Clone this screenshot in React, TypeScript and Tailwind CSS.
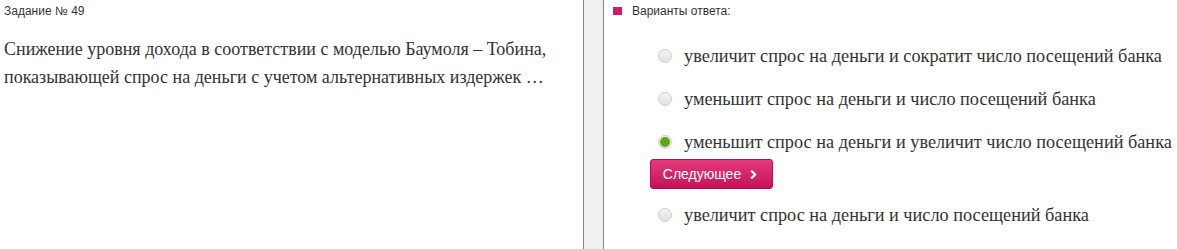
import { ChevronRight } from "lucide-react";

const options = [
  { text: "увеличит спрос на деньги и сократит число посещений банка", checked: false },
  { text: "уменьшит спрос на деньги и число посещений банка", checked: false },
  { text: "уменьшит спрос на деньги и увеличит число посещений банка", checked: true },
];

function Radio({ checked }: { checked: boolean }) {
  return (
    <span className="w-[14px] h-[14px] rounded-full border border-[#cfcfcf] bg-gradient-to-b from-[#f4f4f4] to-[#e2e2e2] flex items-center justify-center shrink-0">
      {checked && <span className="w-[10px] h-[10px] rounded-full bg-[#5aa915]" />}
    </span>
  );
}

function Option({ text, checked }: { text: string; checked: boolean }) {
  return (
    <div className="flex items-center h-[20px] pl-[54px] gap-[12px]">
      <Radio checked={checked} />
      <span className="text-[18.25px] leading-[20px] text-[#333] font-['Liberation_Serif'] whitespace-nowrap">
        {text}
      </span>
    </div>
  );
}

export default function App() {
  return (
    <div className="flex w-[1177px] h-[249px] bg-white overflow-hidden">
      <div className="w-[583px] shrink-0 pl-[4px] pt-[4px]">
        <div className="text-[12px] leading-[14px] text-[#333] font-['Liberation_Sans']">
          Задание № 49
        </div>
        <p className="mt-[17px] text-[18px] leading-[28px] text-[#333] font-['Liberation_Serif']">
          Снижение уровня дохода в соответствии с моделью Баумоля – Тобина,
          <br />
          показывающей спрос на деньги с учетом альтернативных издержек …
        </p>
      </div>

      <div className="w-[21px] shrink-0 border-x border-[#7c7cc6] bg-[#f0f0f0]" />

      <div className="flex-1 flex flex-col">
        <div className="flex items-center gap-[10px] pl-[9px] pt-[4px]">
          <span className="w-[9px] h-[8px] bg-[#d6186a]" />
          <span className="text-[12px] leading-[14px] text-[#333] font-['Liberation_Sans']">
            Варианты ответа:
          </span>
        </div>

        <div className="mt-[28px] flex flex-col gap-[23px]">
          {options.map((o) => (
            <Option key={o.text} text={o.text} checked={o.checked} />
          ))}
        </div>

        <div className="pl-[46px] mt-[7px]">
          <button className="h-[30px] w-[123px] rounded-[3px] border border-[#b90d52] bg-gradient-to-b from-[#e3387a] to-[#c50f58] text-white text-[14px] font-['Liberation_Sans'] flex items-center justify-center gap-[6px]">
            Следующее
            <ChevronRight size={13} strokeWidth={4.5} />
          </button>
        </div>

        <div className="mt-[16px]">
          <Option text="увеличит спрос на деньги и число посещений банка" checked={false} />
        </div>
      </div>
    </div>
  );
}
